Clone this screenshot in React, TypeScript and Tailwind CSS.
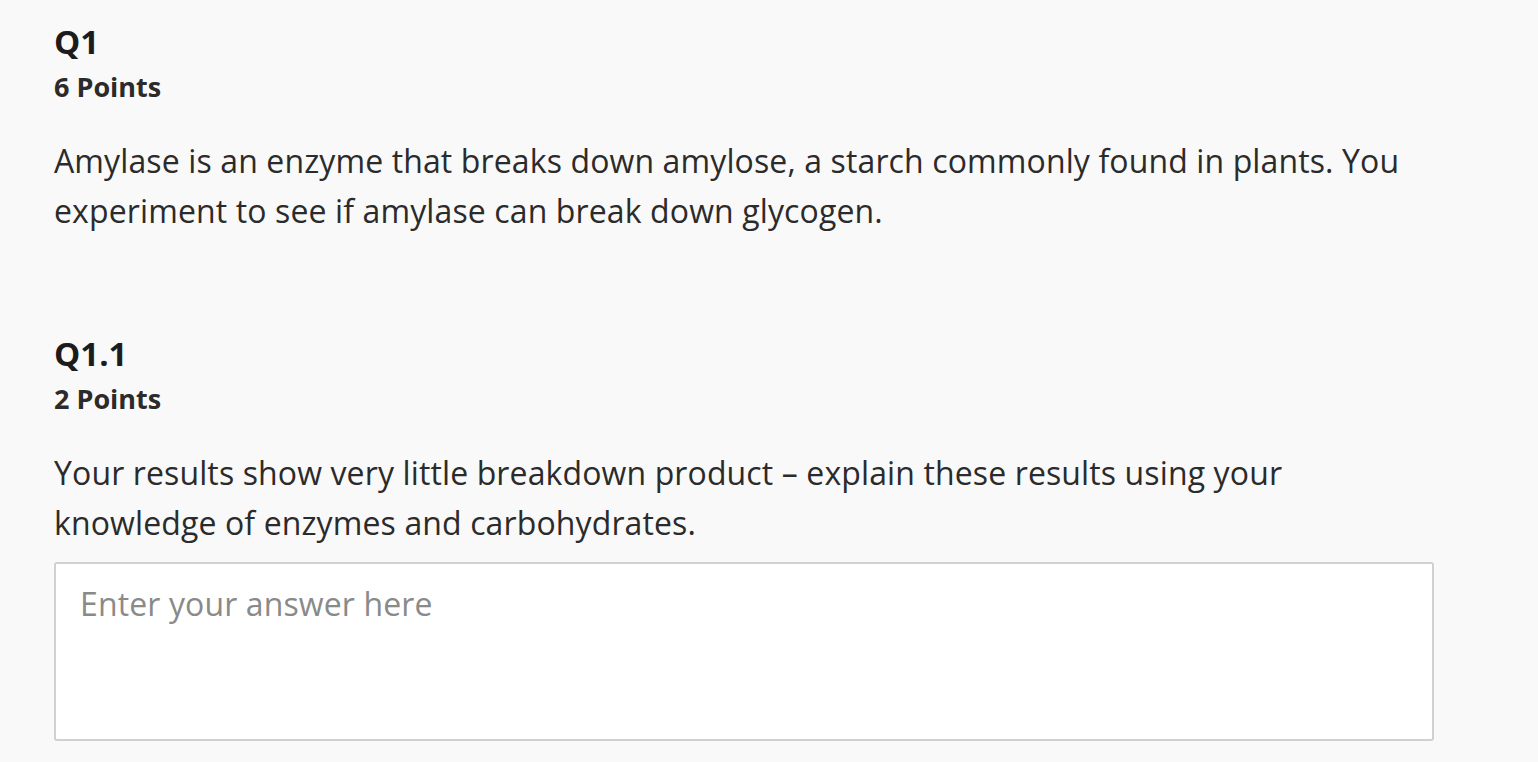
export default function App() {
  return (
    <main
      className="min-h-screen bg-[#f9f9f9] text-[#2b2b2b] pl-[54px] pr-[104px] pt-[20px]"
      style={{ fontFamily: '"Open Sans", "Noto Sans", sans-serif' }}
    >
      {/* Question 1 */}
      <section>
        <h1 className="text-[33px] leading-[44px] font-bold text-[#1c1c1c]">Q1</h1>
        <p className="mt-[5px] text-[27px] leading-[36px] font-bold text-[#2b2b2b]">6 Points</p>
        <p className="mt-[31px] text-[32px] leading-[50px] tracking-[0.12px]">
          Amylase is an enzyme that breaks down amylose, a starch commonly found in plants. You
          experiment to see if amylase can break down glycogen.
        </p>
      </section>

      {/* Question 1.1 */}
      <section className="mt-[96px]">
        <h2 className="text-[33px] leading-[44px] font-bold text-[#1c1c1c]">Q1.1</h2>
        <p className="mt-[5px] text-[27px] leading-[36px] font-bold text-[#2b2b2b]">2 Points</p>
        <p className="mt-[31px] text-[32px] leading-[50px] tracking-[0.12px]">
          Your results show very little breakdown product – explain these results using your
          knowledge of enzymes and carbohydrates.
        </p>
        <textarea
          placeholder="Enter your answer here"
          className="mt-[14px] block w-[1380px] h-[179px] resize-none rounded-[3px] border-2 border-[#d0d0d0] bg-white px-[24px] py-[16px] text-[32px] leading-[48px] tracking-[0.12px] text-[#2b2b2b] placeholder:text-[#8a8a8a] outline-none"
          style={{ fontFamily: '"Open Sans", "Noto Sans", sans-serif' }}
        />
      </section>
    </main>
  );
}
